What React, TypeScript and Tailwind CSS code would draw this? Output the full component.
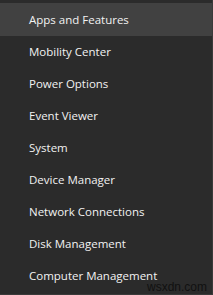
import React from "react";

const items = [
  "Apps and Features",
  "Mobility Center",
  "Power Options",
  "Event Viewer",
  "System",
  "Device Manager",
  "Network Connections",
  "Disk Management",
  "Computer Management",
];

export default function App() {
  return (
    <div
      className="relative w-[213px] h-[295px] bg-[#2b2b2b] border-r border-b border-[#3a3a3a] pt-[3px] overflow-hidden"
      style={{ fontFamily: '"Open Sans", "Noto Sans", sans-serif' }}
    >
      <ul className="flex flex-col">
        {items.map((t, i) => (
          <li
            key={t}
            className={`flex items-center pl-[29px] text-[11.5px] text-[#f2f2f2] ${
              i === 0 ? "h-[33px] bg-[#414141]" : "h-[32px]"
            }`}
          >
            {t}
          </li>
        ))}
      </ul>
      <div
        className="absolute left-[147px] top-[281px] text-[12px] text-[#111111] leading-none"
        style={{ fontFamily: '"Liberation Sans", sans-serif' }}
      >
        wsxdn.com
      </div>
    </div>
  );
}
